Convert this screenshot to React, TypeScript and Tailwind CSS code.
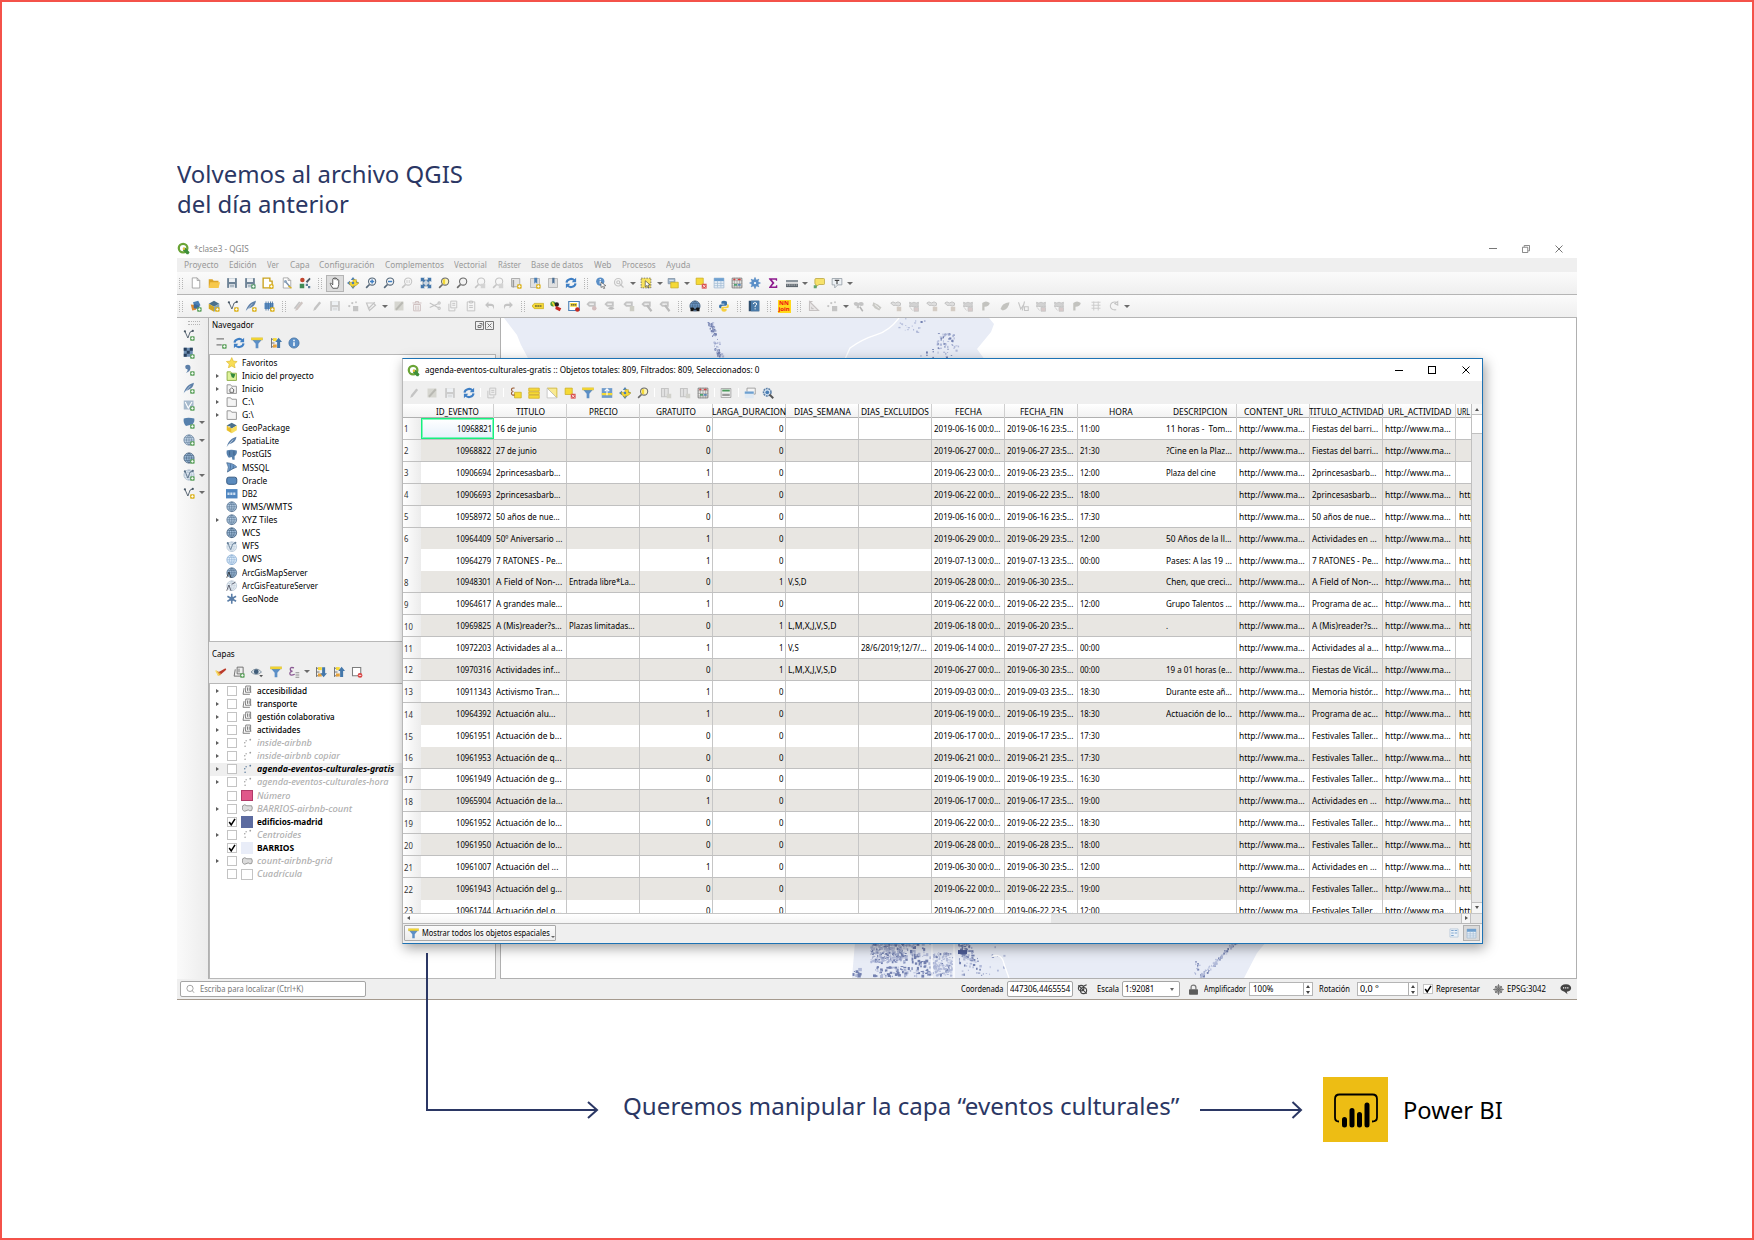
import { useLayoutEffect, useRef, type ReactNode } from "react";

/* Text squeezed horizontally: to width w when given, else by a fixed ratio. */
function Fit({ children, w, r = 0.86 }: { children: string; w?: number; r?: number }) {
  const inner = useRef<HTMLSpanElement>(null);
  const outer = useRef<HTMLSpanElement>(null);
  useLayoutEffect(() => {
    if (!inner.current || !outer.current) return;
    const natural = inner.current.offsetWidth;
    const target = w ?? natural * r;
    outer.current.style.width = `${target}px`;
    inner.current.style.transform = `scaleX(${target / natural})`;
  }, [children, w, r]);
  return (
    <span ref={outer} className="inline-block shrink-0 whitespace-pre align-top">
      <span ref={inner} className="inline-block origin-left whitespace-pre">
        {children}
      </span>
    </span>
  );
}

const BLUE = "#5b8fc7";
const DARK = "#4a5866";
const YEL = "#f5d936";
const G = "#c4c4c4";

const plus = (c = "#5fa35f") => (
  <g>
    <rect x="9.5" y="9.5" width="6" height="6" rx="1" fill={c} />
    <path d="M12.5 10.8v3.4M10.8 12.5h3.4" stroke="#fff" strokeWidth="1.2" />
  </g>
);
const lens = (c: string, body?: ReactNode, fill = "none") => (
  <g>
    <path d="M6 10L1.5 14.5" stroke={c} strokeWidth="2.2" />
    <circle cx="9.5" cy="6" r="4.8" fill={fill} stroke={c} strokeWidth="1.4" />
    {body}
  </g>
);
const globe = (c: string, f: string) => (
  <g>
    <circle cx="8" cy="8" r="6.8" fill={f} stroke={c} strokeWidth="1" />
    <path d="M1.5 8h13M2.5 4.8h11M2.5 11.2h11M8 1.2v13.6M8 1.2c-4.5 4-4.5 9.600 0 13.600M8 1.200c4.500 4 4.500 9.600 0 13.600" fill="none" stroke={c} strokeWidth="0.7" />
  </g>
);
const disk = (c: string) => (
  <g>
    <path d="M1.500 1.500h13v13h-13z" fill={c} />
    <path d="M4 1.500h8v5h-8zM4 9.500h8v5H4z" fill="#eef1f4" />
    <path d="M5 11.500h6M5 13h6" stroke={c} strokeWidth="0.8" />
  </g>
);
const pencil = (c: string) => <path d="M3 14.500l1-4L11 2l2.500 2-7 8.500z" fill={c} />;
const funnel = (
  <g>
    <path d="M1 3h14L9.800 9v6H6.200V9z" fill={BLUE} />
    <path d="M.5 1h15v3H.5z" fill={YEL} stroke="#c9ae20" strokeWidth="0.5" />
  </g>
);
const refresh = (
  <g fill="none" stroke="#3f7fc4" strokeWidth="2.800">
    <path d="M2 7.500a6 5.500 0 0 1 10.500-3M14 8.500a6 5.500 0 0 1-10.500 3" />
    <path d="M14.800 1v6H9zM1.200 15V9H7z" fill="#3f7fc4" stroke="none" />
  </g>
);
const tree = (up: boolean) => (
  <g>
    <path d="M2 1.500v13M2 3h4M2 8h4M2 13h4" stroke="#6a6a6a" strokeWidth="1.200" fill="none" />
    <rect x="4" y="1.500" width="5" height="4" fill={YEL} />
    <rect x="4" y="10" width="5" height="4" fill="#e6a23a" />
    <path d={up ? "M9.500 14.500V6.500H7L11.500 1 16 6.500h-2.500v8z" : "M9.500 1.500v8H7l4.500 5.500L16 9.500h-2.500v-8z"} fill="#4477aa" />
  </g>
);
const label = (c: string, extra?: ReactNode) => (
  <g>
    <path d="M1 5l3-3h9v7H4L1 6z" fill={c} />
    <path d="M4.500 5.500h6" stroke="#fff" strokeWidth="1.500" />
    {extra}
  </g>
);
const page = (c: string) => <path d="M3 1.200h6.500L13 4.700v10H3zM9.500 1.200v3.500H13" fill="#fff" stroke={c} strokeWidth="1.100" />;
const vee = (c = DARK, extra?: ReactNode) => (
  <g>
    <path d="M2.500 3l4 9L9.500 4 13 2.500" fill="none" stroke={c} strokeWidth="1.200" />
    <circle cx="2.500" cy="3" r="1.500" fill={c} />
    <circle cx="13" cy="2.500" r="1.500" fill={c} />
    {extra}
  </g>
);
const feather = (c = "#5c7fa8", extra?: ReactNode) => (
  <g>
    <path d="M1 15C3 8 7 3 14.500 1 14 7 10 10 4 11.500z" fill={c} />
    <path d="M1 15L10 5" stroke="#dfe9f3" strokeWidth="0.900" />
    {extra}
  </g>
);
const folder = (
  <path d="M1.500 2.500h5l1.500 2h6.500v10h-13z" fill="#f4f4f4" stroke="#8a8a8a" strokeWidth="1.200" />
);

const ICONS: Record<string, ReactNode> = {
  new: page("#9a9a9a"),
  open: (
    <g>
      <path d="M1 3h5l1.500 2H14v9H1z" fill="#dba52a" />
      <path d="M3 7h13l-2 7.500H1z" fill="#f7c84b" />
    </g>
  ),
  save: disk("#6e8396"),
  saveas: <g>{disk("#6e8396")}{plus("#5f9e72")}</g>,
  layout: <g><path d="M1.500 1.500h9v4h3v9h-12z" fill="#fff" stroke="#c9a21d" strokeWidth="1.800" />{plus("#dcb31e")}</g>,
  layoutmgr: <g>{page("#a0a0a0")}<path d="M5 5l7 8" stroke="#7b93ad" strokeWidth="2" /><circle cx="6" cy="6" r="2" fill="#8ea6bf" /><path d="M10 12l4 3" stroke="#dcb31e" strokeWidth="2" /></g>,
  style: <g><circle cx="4.500" cy="4" r="3" fill="#c0452e" /><path d="M9 6l5-5 1.500 1.500L11 8z" fill="#4d5c68" /><path d="M1 9h6v6H1z" fill="#3f8a55" /><path d="M9 9h3v3H9zM12 12h3v3h-3z" fill="#5d7f9b" /></g>,
  hand: <path d="M5 15L2 10c-1-2 .5-2.500 1.500-1L5 10.500V3c0-1.500 2-1.500 2 0v-1c0-1.500 2-1.500 2 0v1c0-1.500 2-1.500 2 .3v1c0-1.200 2-1.200 2 .3V10c0 2-1 3-1.500 5z" fill="#fff" stroke="#333" strokeWidth="1" />,
  pan: <g><path d="M8 0l3 4H5zM8 16l3-4H5zM0 8l4-3v6zM16 8l-4-3v6z" fill="#4b7fb5" /><path d="M8 3.500h4.500v4H16l-4 4H8.500V14L4 10.500 3 7h5z" fill={YEL} stroke="#b89a1c" strokeWidth="0.700" /><path d="M6.500 6.500h3v3h-3z" fill="#4b7fb5" /></g>,
  zin: lens("#56687a", <path d="M9.500 3.200v5.600M6.700 6h5.600" stroke="#3f7fc4" strokeWidth="2" />),
  zout: lens("#56687a", <path d="M6.700 6h5.600" stroke="#3f7fc4" strokeWidth="2" />),
  z11: lens(G, <path d="M8 4v4M11 4v4" stroke={G} />),
  zfull: <g><path d="M4 4h8v8H4z" fill="#c9d5e1" stroke="#56687a" strokeWidth="0.800" /><path d="M1 1h5.500L5 2.800 7 5 5 7 2.800 5 1 6.500zM15 1v5.500L13.200 5 11 7 9 5l2-2.200L9.500 1zM1 15V9.500L2.800 11 5 9l2 2-2 2.200L6.500 15zM15 15H9.500l1.500-1.800L9 11l2-2 2.200 2L15 9.500z" fill="#4477ab" /></g>,
  zsel: lens("#6a6a6a", <path d="M6.500 3h3v6.500h-3z" fill={YEL} />, "#fbf3b8"),
  zlay: lens("#6a6a6a", null, "#f3f3f3"),
  zgray: lens(G, <path d="M9 9h6v6H9z" fill="#d4d4d4" />),
  mapnew: <g><path d="M2 2h11v11H2z" fill="#e4e4e4" stroke="#999" /><path d="M4.500 4v10" stroke="#999" strokeWidth="2" />{plus("#dcb31e")}</g>,
  book: <g><path d="M2 2h12v12H2z" fill="#e0e0e0" stroke="#aaa" /><path d="M7 1h4v8L9 7 7 9z" fill="#4b7fb5" />{plus("#dcb31e")}</g>,
  book2: <g><path d="M2 2h12v12H2z" fill="#e0e0e0" stroke="#aaa" /><path d="M7 1h3v8L8.500 7.500 7 9z" fill="#4b6f95" /></g>,
  refresh,
  ident: <g><circle cx="7" cy="6" r="5.500" fill="#5b8fc7" /><path d="M7 5v4M7 2.600v1.400" stroke="#fff" strokeWidth="1.600" /><path d="M8 7l6.500 4.500-3 .5 1.500 3-1.500.5-1.500-3-2 1.500z" fill="#fff" stroke="#444" strokeWidth="0.800" /></g>,
  action: <g fill="none" stroke={G} strokeWidth="1.600"><circle cx="7" cy="7" r="5" /><circle cx="7" cy="7" r="2" /><path d="M9 9l5 5" /></g>,
  selrect: <g><path d="M1.500 1.500h13v13h-13z" fill="#f8e35d" stroke="#5a5a5a" strokeDasharray="2 1.500" /><path d="M7 5l6.500 5.500-3 .3 1.500 3-1.500.6-1.300-3L7 13z" fill="#fff" stroke="#333" strokeWidth="0.800" /></g>,
  selval: <g><path d="M1.500 2h9v7h-9z" fill="#9db4cb" stroke="#8292a3" /><path d="M5 7h10v7.500H5z" fill={YEL} stroke="#c9ae20" /><path d="M3 4.500h6" stroke="#fff" /></g>,
  desel: <g><path d="M1.500 1.500h9.500V10H1.500z" fill={YEL} stroke="#c9ae20" /><path d="M9 9h6.500v6.500H9z" fill="#d94f4f" /><path d="M10.500 10.500l3.500 3.500M14 10.500L10.500 14" stroke="#fff" /></g>,
  table: <g><path d="M1.500 1.500h13v13h-13z" fill="#e7eff7" stroke="#9cb6d0" /><path d="M1.500 1.500h13V5.500h-13z" fill="#6ea0d0" /><path d="M1.500 8.500h13M1.500 11.500h13M6 5v9M10.500 5v9" stroke="#a5bdd4" /></g>,
  stats: <g><path d="M1.500 1.500h13v13h-13z" fill="#f1f1ee" stroke="#666" /><path d="M1 5h14M1 8.500h14M1 12h14M4.500 1v14M8 1v14M11.500 1v14" stroke="#8a8a8a" strokeWidth="0.800" /><path d="M3 3.300h3M9 3.300h4" stroke="#cc4444" strokeWidth="2" /><path d="M4 10.500h4" stroke="#3c9a62" strokeWidth="2" /><path d="M9 10.500h4" stroke="#4b7fb5" strokeWidth="2" /></g>,
  gear: <g stroke="#5b8fc7" strokeWidth="2.200"><circle cx="8" cy="8" r="4" fill="#8db4dc" /><path d="M8 .8v14.400M.8 8h14.400M3 3l10 10M13 3L3 13" /><circle cx="8" cy="8" r="1.500" fill="#fff" stroke="none" /></g>,
  sigma: <path d="M2.500 1.500h11v3.500h-1.500l-.5-1.500H6.500L10 8l-4 4.700h5.500l.7-1.700h1.500v3.700h-11v-1L7 8 2.500 2.500z" fill="#8d1a8d" />,
  measure: <g><path d="M0 4h16v3H0z" fill="#8c959d" /><path d="M0 9h16v4.500H0z" fill="#5d666e" /><path d="M1 10.700h14" stroke="#ddd" strokeDasharray="2 1" /></g>,
  tip: <g><path d="M4 2h10q1.500 0 1.500 1.500v5Q15.500 10 14 10H8l-4 3v-3q-1.500 0-1.500-1.500v-5Q2.500 2 4 2z" fill="#f7e26b" stroke="#b5a13b" /><path d="M1 11h4v4H1z" fill="#62a36d" /></g>,
  text: <g><path d="M1.500 2h13v8.500H9l-4 4v-4H1.500z" fill="#edf1f4" stroke="#8d979f" /><path d="M5 4.500h6M8 4.500v5" stroke="#444" strokeWidth="1.500" /></g>,
  dsm: <g><path d="M4 3l7-2 3 6-7 4z" fill="#4b7fb5" /><path d="M1 6l8 1-1 6-5 1z" fill="#dd8c32" /><path d="M5 5l8 3-2 4-6-1z" fill="#3d6a98" />{plus()}</g>,
  gpkg: <g><path d="M1 5l7-4 7 4-7 4z" fill="#4a708c" /><path d="M1 5l7 4v6.500l-7-4z" fill="#e9bf2a" /><path d="M15 5L8 9v6.500l7-4z" fill="#f7dd5c" /><path d="M3 7l3-1" stroke="#fff" /></g>,
  gpkgnew: <g><path d="M1 5l7-4 7 4-7 4z" fill="#4a708c" /><path d="M1 5l7 4v6.500l-7-4z" fill="#cfa524" /><path d="M15 5L8 9v6.500l7-4z" fill="#86a5b5" />{plus("#dcb31e")}</g>,
  shp: vee(DARK, plus("#dcb31e")),
  vec: vee(DARK, plus()),
  vecy: vee(DARK, plus("#dcb31e")),
  spl: feather("#5c7fa8", plus("#dcb31e")),
  splg: feather("#5c7fa8", plus()),
  feather: feather(),
  chip: <g><path d="M2 4h12v8H2z" fill="#5b8fc7" /><path d="M4 2v12M7 2v12M10 2v12M12.500 2v12" stroke="#46729f" strokeWidth="1.200" />{plus("#dcb31e")}</g>,
  pencils: <g>{pencil("#cfc6c3")}<path d="M1 11L8 2l2 1-7 9z" fill={G} /></g>,
  pencil: pencil(G),
  gsave: disk("#cccccc"),
  gpts: <g fill={G}><circle cx="3" cy="8" r="1.500" /><circle cx="7" cy="4" r="1.500" /><circle cx="12" cy="3" r="1.200" /><path d="M8 8h7v7H8z" /></g>,
  gnode: <g><path d="M2 4h9l3 3-8 7z" fill="none" stroke={G} strokeWidth="1.600" /><path d="M4 12l9-9" stroke={G} strokeWidth="1.500" /></g>,
  gnote: <g><path d="M2 2h12v12H2z" fill="#d6d6d0" /><path d="M4 13L13 3" stroke="#b9b9b3" strokeWidth="2.500" /></g>,
  gtrash: <path d="M2 4h12M6 4V2h4v2M3.500 6h9v8.500h-9zM6.500 7.500v6M9.500 7.500v6" fill="none" stroke="#cfc0c0" strokeWidth="1.300" />,
  gcut: <g fill="none" stroke={G} strokeWidth="1.500"><path d="M1 4l11 6M1 10l11-5" /><circle cx="13.500" cy="11" r="1.500" /><circle cx="13.500" cy="4" r="1.500" /></g>,
  gcopy: <path d="M5 1.500h8v9H5zM2.500 5v9.500h8v-3M7 4.500h4M7 7h4" fill="none" stroke={G} strokeWidth="1.300" />,
  gpaste: <path d="M3 2.500h10v12H3zM6 1.500h4v2.500H6zM5.500 7.500h5M5.500 10h5" fill="none" stroke={G} strokeWidth="1.300" />,
  gundo: <path d="M6 2L1.500 6.500 6 11V8h4q2.500 0 2.500 5Q15.500 5 9.500 5H6z" fill={G} />,
  gredo: <path d="M10 2l4.500 4.500L10 11V8H6q-2.500 0-2.500 5Q.5 5 6.500 5H10z" fill={G} />,
  lab: <g><path d="M0 8l3-3.500h12.500v7H3z" fill={YEL} stroke="#c9ae20" /><path d="M4 8h9" stroke="#333" strokeWidth="1.600" strokeDasharray="2.500 .6" /></g>,
  diag: <g><circle cx="4" cy="5" r="3.500" fill="#4e9a3c" /><circle cx="9" cy="6" r="3" fill="#222" /><path d="M8 8l7 3-2 4-6-3z" fill="#c6281f" /><path d="M3 3l3 5" stroke={YEL} strokeWidth="2" /></g>,
  labbox: <g><path d="M1 2h14v12H1z" fill="#fff" stroke="#4b7fb5" strokeWidth="1.500" /><path d="M3 4h9v5H3z" fill={YEL} /><path d="M4 6.500h7" stroke="#444" strokeWidth="1.500" strokeDasharray="2 .6" /><circle cx="12.500" cy="12.500" r="3" fill="#c6281f" /></g>,
  gl1: label(G, <circle cx="11" cy="11" r="3" fill="#d3bdbd" />),
  gl2: label(G, <path d="M5 11q5-4 9 0-4 4-9 0" fill="#bdbdbd" />),
  gl3: label(G, <path d="M9 8h6v7H9z" fill="#cdcdc4" />),
  gl4: label(G, <path d="M8 7l6 8" stroke="#bbb" strokeWidth="3" />),
  metas: <g>{globe("#3e5875", "#6f9bcb")}<path d="M2 15V10h4l1 2h2l1-2h4v5h-4v-2H6v2z" fill="#141414" /></g>,
  python: <g><path d="M8 1C5 1 4.500 2 4.500 3.500V5H8.500v1H3C1 6 1 11 3 11h1.500V9q0-1.500 2-1.500h4Q12 7.500 12 6V3.500Q12 1 8 1z" fill="#3a72a8" /><path d="M8 15.500c3 0 3.500-1 3.500-2.500v-1.500H7.500V10.500H13c2 0 2-5 0-5h-.8V7.500q0 1.500-2 1.500h-4Q4.500 9 4.500 10.500V13q0 2.500 3.500 2.500z" fill="#f6cf3f" /></g>,
  help: <g><path d="M1 1h14v14H1z" fill="#2f4d6c" /><path d="M4 1h11v14H4z" fill="#4a7aa8" /><path d="M7 5.500q0-2 2.300-2t2.200 2q0 1.300-2 2.500v1.500M9.500 11v1.500" stroke="#fff" strokeWidth="1.300" fill="none" /></g>,
  ruler: <path d="M2 2l12 12H2zM5 9v2.500h2.500M2 2h4" fill="#e9e7e7" stroke="#c6c2c2" strokeWidth="1.500" />,
  gq1: <g><path d="M1 4q3-3 6 0 4-3 7 0v3q-3 2-6 0v4H5V8Q1 8 1 4z" fill={G} /><path d="M9 9l4 6" stroke="#b5b5b5" strokeWidth="2" /></g>,
  gq2: <g><path d="M3 3l6 3 5 4-3 4-6-3-3-4z" fill="#c9c9c5" /><path d="M5 6l6 5" stroke="#fff" /></g>,
  gq3: <g><path d="M1 4q3-3 6 0 4-3 7 0v3q-3 2-6 0-4 2-7-3z" fill="#dedede" stroke="#bfbfbf" strokeWidth="1.200" /><path d="M9 9h6v6H9z" fill="#d4ccc4" /></g>,
  gq4: <g><path d="M2 3q3 2 6 0 3 2 6 0-1 4 0 6-3-1-6 0-3-1-6 0 1-3 0-6z" fill="#d2d2d2" stroke="#bebebe" /><path d="M3 10l3 4M8 10h6v5H8z" fill="#d8caca" stroke="#c4c4c4" /></g>,
  gq5: <path d="M3 14V4q5-4 10 0-1 5-7 5v5z" fill="#c3c3bf" />,
  gq6: <path d="M2 12q2-8 12-9-1 9-9 11z" fill="#c3c3bf" />,
  gq7: <path d="M2 3l3 9 4-6M10 2l-3 12M10 9h5v5h-5z" fill="none" stroke={G} strokeWidth="1.400" />,
  gq8: <path d="M2 3h12M2 7h12M2 11h12M5 2v12M11 2v12" fill="none" stroke="#cccccc" strokeWidth="1.300" />,
  gq9: <path d="M12 3Q4 1 3 8q1 6 8 5M9 5l4-3v5z" fill="none" stroke={G} strokeWidth="1.400" />,
  raster: <g><path d="M1 1h12v12H1z" fill="#6e8fb3" /><path d="M1 1h4v4H1zM9 1h4v4H9zM5 5h4v4H5zM1 9h4v4H1z" fill="#28405e" />{plus()}</g>,
  comma: <g><path d="M3 4q0-3 3.500-3T10 5q0 5-6 7 3-3 2-5-3 0-3-3z" fill="#5c7fa8" />{plus()}</g>,
  virt: <g><path d="M1 2h13v12H1z" fill="#a6b9cc" /><path d="M3 4l4 8 5-8" stroke="#fff" fill="none" strokeWidth="1.500" />{plus()}</g>,
  pg: <g><path d="M1 2q6-2 14 0 1 5-3 8v5H9l-1-4-4 1Q0 8 1 2z" fill="#5781ad" /><path d="M5 3v6M11 3v6" stroke="#36577c" /></g>,
  pgadd: <g><path d="M1 2q6-2 14 0 1 5-3 8l-4 1-4 1Q0 8 1 2z" fill="#5781ad" />{plus()}</g>,
  wmsadd: <g>{globe("#5d7896", "#c3d5e7")}{plus()}</g>,
  wcsadd: <g>{globe("#3e5875", "#9fbedc")}{plus()}</g>,
  wfsadd: <g>{globe("#a3b6c9", "#e6eef5")}{vee("#5a7188")}{plus()}</g>,
  wms: globe("#4c6a89", "#b3cae1"),
  wcs: globe("#33506f", "#a6c3e0"),
  wfs: <g>{globe("#b3c4d5", "#e9f0f6")}{vee("#67809a")}</g>,
  ows: globe("#7fa6cf", "#e2eefb"),
  arc: <g>{globe("#4c6a89", "#9ab6d2")}<path d="M1 15l3-8 3 8" stroke="#222" fill="none" /></g>,
  arcf: <g>{globe("#b3c2d0", "#edf2f7")}<path d="M1 15l3-8 3 8M8 6l5-3" stroke="#334" fill="none" /></g>,
  geonode: <g stroke="#5c7fa8" strokeWidth="2.200"><path d="M8 1v14M2 4.500l12 7M14 4.500l-12 7" /><circle cx="8" cy="8" r="2" fill="#5c7fa8" /></g>,
  star: <path d="M8 .8l2.200 4.900 5.300.6-4 3.600 1.200 5.300L8 12.500l-4.700 2.700 1.200-5.300-4-3.600 5.300-.6z" fill="#f8dd55" stroke="#d8b424" strokeWidth="0.800" />,
  projhome: <g><path d="M1.500 2.500h5l1.500 2h6.500v10h-13z" fill="#dff29c" stroke="#86a83a" strokeWidth="1.200" /><path d="M6 4l7 2-2 5-3-1z" fill="#338a3c" /></g>,
  home: <g>{folder}<path d="M4.500 10L8 6.500l3.500 3.500M5.500 9.500V13h5V9.500" stroke="#444" fill="none" /></g>,
  folder,
  mssql: <path d="M1 1q10 1 14 6Q9 9 2 14q3-7-1-13zM6 3q1 5-1 9M10 5q1 3-1 5" fill="#6f9bcb" stroke="#3e6289" strokeWidth="1" />,
  oracle: <rect x="1" y="3" width="14" height="10" rx="3" fill="#5b8bbd" stroke="#35587f" strokeWidth="1.300" />,
  db2: <g><path d="M0 1.500h16v13H0z" fill="#4f86c0" /><path d="M2 8h12" stroke="#cfe0f2" strokeWidth="3.500" strokeDasharray="3 1" /></g>,
  addlay: <g><path d="M2 2.500h10M2 10.500h7" stroke="#7d7d7d" strokeWidth="1.400" />{plus()}</g>,
  funnel,
  up: tree(true),
  down: tree(false),
  info: <g><circle cx="8" cy="8" r="6.800" fill="#5b8fc7" stroke="#426f9f" /><path d="M8 7v5M8 3.800v1.800" stroke="#fff" strokeWidth="2" /></g>,
  brush: <g><path d="M1 6l5 2 2 4-4 1z" fill="#e5a132" /><path d="M5 8L14 3l1 2-7 6z" fill="#bb3a2a" /><path d="M1 6l4 7" stroke="#f6dd68" strokeWidth="2" /></g>,
  group: <g fill="none" stroke="#686868" strokeWidth="1.200"><path d="M5.500 1.500h7v9M5.500 1.500L5 10.500h8.500M3 4.500L1.500 13.500h10M8 3.500v5M10.500 3.500v5" /></g>,
  groupadd: <g><path d="M5.500 1.500h8v9h-8zM3 4.500L1.500 13.500h10M8 3.500v5" fill="none" stroke="#686868" strokeWidth="1.200" />{plus()}</g>,
  eye: <g><path d="M0 8q7-8 14 0-7 6.500-14 0z" fill="#dfe5ea" stroke="#6b7d8d" /><circle cx="7" cy="7.500" r="3.200" fill="#3f5c78" /><path d="M11 12h5l-2.500 3z" fill="#555" /></g>,
  eps: <g><path d="M8 2.500Q3 1 3 4t3 3Q2 7.500 2.500 10.500T9 11" fill="none" stroke="#8a5a93" strokeWidth="1.700" /><path d="M10 9h5M10 12h5M10 15h5" stroke="#8e8e8e" strokeWidth="1.500" /></g>,
  remove: <g><path d="M2 2h11v11H2z" fill="#fff" stroke="#7d7d7d" strokeWidth="1.400" /><circle cx="12" cy="12.500" r="3.200" fill="#d94343" /><path d="M10.300 12.500h3.400" stroke="#fff" strokeWidth="1.200" /></g>,
  points: <g fill="#9d9d9d"><circle cx="4" cy="7" r="1.100" /><circle cx="6" cy="4" r="1" /><circle cx="12" cy="2.500" r="1.300" /><circle cx="4.500" cy="12" r="1.100" /></g>,
  pointsb: <g fill="#5a7a9c"><circle cx="4" cy="7" r="1.100" /><circle cx="6" cy="4" r="1" /><circle cx="12" cy="2.500" r="1.300" /><circle cx="4.500" cy="12" r="1.100" /></g>,
  poly: <path d="M1 4q3-3 6 0h7q2 3 0 7-3 1-5-1l-5 2Q-1 11 1 4z" fill="#dcdcdc" stroke="#888" strokeWidth="1.200" />,
  selexp: <g><path d="M6 7h9v7.500H6z" fill={YEL} stroke="#c9ae20" /><path d="M6 1.500Q2 1 2 3.500T4.500 6Q1.500 6.500 2 9t4 1.500" fill="none" stroke="#9a5a30" strokeWidth="1.500" /></g>,
  selall: <path d="M1 1.500h14v4H1zM1 6.500h14v3.500H1zM1 11h14v4H1z" fill={YEL} stroke="#d0ab23" />,
  selinv: <g><path d="M1.500 1.500h13v13z" fill="#f9ea91" stroke="#c9ae20" /><path d="M1.500 1.500v13h13z" fill="#fff" stroke="#bbb" /></g>,
  seltop: <g><path d="M1 1.500h14v13H1z" fill="#6f9bcb" /><path d="M1 8h14v3H1z" fill={YEL} /><path d="M8 3v8M5 5.500L8 2.500l3 3" stroke="#fff" fill="none" strokeWidth="1.500" /></g>,
  gcol: <g><path d="M2 2h9v11H2zM6 2v11" fill="#e2e2e2" stroke={G} strokeWidth="1.500" /><path d="M9 9h6v6H9z" fill="#d2d2cc" /></g>,
  cond: <g><path d="M1.500 2h13v12h-13z" fill="#eee" stroke="#999" /><path d="M3 3.500h10v2.500H3z" fill="#4a9a5a" /><path d="M3 9h10v3H3z" fill="#9a9a9a" /></g>,
  dock: <g><path d="M4 1.500h11v8H4z" fill="#f4f4f4" stroke="#8c8c8c" /><path d="M1 6h12v9H1z" fill="#dfe9f3" /><path d="M1 6h12v3H1z" fill="#6ea0d0" /></g>,
  acts: <g><circle cx="7" cy="7" r="5" fill="#d8e5f2" stroke="#5a7ea6" strokeWidth="2" strokeDasharray="2.500 1" /><circle cx="7" cy="7" r="2.500" fill="#4b7fb5" /><path d="M10 10l5 5" stroke="#555" strokeWidth="2.500" /></g>,
  form: <g><path d="M1.500 1.500h13v13h-13z" fill="#eaf1f8" stroke="#a9bfd6" /><path d="M3.500 4h4M3.500 8h4M3.500 12h4M9 4h4M9 8h4" stroke="#7fa6cf" strokeWidth="1.600" /></g>,
  qgis: <g><circle cx="7.500" cy="7.500" r="5.300" fill="none" stroke="#6aa436" strokeWidth="2.800" /><path d="M7.500 7l3 0 5 5.500-1.500 2.500h-2l-4.500-5z" fill="#3f8f3a" /><circle cx="8.500" cy="8.300" r="1.500" fill="#e8c33a" /></g>,
  ext: <g fill="none" stroke="#444" strokeWidth="1.600"><circle cx="6" cy="6" r="4" /><circle cx="9.500" cy="9.500" r="4.500" /><path d="M2 2l12 12M10 3l4-2" /></g>,
  lock: <g><path d="M4.500 8V5q0-3.500 3.500-3.500T11.500 5v3" fill="none" stroke="#777" strokeWidth="1.800" /><rect x="1.500" y="7.500" width="13" height="8" rx="1" fill="#5c5c5c" /></g>,
  crs: <g stroke="#666" strokeWidth="1.100" fill="none"><circle cx="8" cy="8" r="5.500" fill="#d0d0d0" /><circle cx="8" cy="8" r="3" /><path d="M8 0v16M0 8h16M3 3l10 10M13 3L3 13" /></g>,
  bubble: <g><path d="M8 1.500c9 0 9 10 1 10l1 3.500-4-3.500c-8-1-7-10 2-10z" fill="#444" /><path d="M4 6.500h8" stroke="#fff" strokeWidth="1.600" strokeDasharray="1.600 1.200" /></g>,
  search: <g fill="none" stroke="#888" strokeWidth="1.200"><circle cx="8" cy="7" r="5" /><path d="M11.500 10.500l3 3.500" /></g>,
};

function Icon({ k, cls = "size-[12px]" }: { k: string; cls?: string }) {
  if (k === "nn")
    return (
      <span className="flex size-[13px] flex-col items-center justify-center bg-[#ffd91a] text-[6px] leading-[6px] font-bold text-[#f01010]">
        <span>NN</span>
        <span>join</span>
      </span>
    );
  return (
    <svg viewBox="0 0 16 16" className={`${cls} shrink-0`}>
      {ICONS[k]}
    </svg>
  );
}

const Caret = () => <span className="border-x-[3px] border-t-[3.5px] border-x-transparent border-t-[#6b6b6b]" />;
const Dots = () => <span className="h-[11px] w-[4px] border-x border-dotted border-[#b5b5b5]" />;

/* Tool strip: "|" draws a grip, ":" a thin divider, "v" a drop-down caret, "!x" a pressed button. */
function Tools({ items }: { items: string }) {
  return (
    <>
      {items.split(" ").map((t, i) => {
        if (t === "|") return <span key={i} className="flex w-[11.6px] shrink-0 justify-center"><Dots /></span>;
        if (t === ":") return <span key={i} className="flex w-[5.3px] shrink-0 justify-center"><span className="h-[9px] w-px bg-[#fff]" /></span>;
        if (t === "v") return <span key={i} className="flex w-[9px] shrink-0 justify-center"><Caret /></span>;
        if (t[0] === "!")
          return (
            <span key={i} className="flex h-[17px] w-[18.2px] shrink-0 items-center justify-center border border-[#b4b4b4] bg-[#dcdcdc]">
              <Icon k={t.slice(1)} />
            </span>
          );
        return <span key={i} className="flex w-[18.2px] shrink-0 justify-center"><Icon k={t} /></span>;
      })}
    </>
  );
}

const MENU: [string, number][] = [
  ["Proyecto", 34.7], ["Edición", 28], ["Ver", 11.8], ["Capa", 19.3], ["Configuración", 55], ["Complementos", 59.3],
  ["Vectorial", 33], ["Ráster", 23], ["Base de datos", 52], ["Web", 17.7], ["Procesos", 33.7], ["Ayuda", 25],
];

const NAV: [string, string, boolean, number][] = [
  ["star", "Favoritos", false, 35.5], ["projhome", "Inicio del proyecto", true, 72], ["home", "Inicio", true, 21.5],
  ["folder", "C:\\", true, 11.5], ["folder", "G:\\", true, 11.5], ["gpkg", "GeoPackage", false, 47.5],
  ["feather", "SpatiaLite", false, 37.5], ["pg", "PostGIS", false, 29.5], ["mssql", "MSSQL", false, 27.5],
  ["oracle", "Oracle", false, 25], ["db2", "DB2", false, 15.5], ["wms", "WMS/WMTS", false, 50],
  ["wms", "XYZ Tiles", true, 35.5], ["wcs", "WCS", false, 18.5], ["wfs", "WFS", false, 17], ["ows", "OWS", false, 19.5],
  ["arc", "ArcGisMapServer", false, 66], ["arcf", "ArcGisFeatureServer", false, 76], ["geonode", "GeoNode", false, 36.5],
];

type Layer = { n: string; w: number; k: string; arrow?: boolean; on?: boolean; s: "n" | "g" | "b" | "bi" };
const LAYERS: Layer[] = [
  { n: "accesibilidad", w: 50, k: "group", arrow: true, s: "n" },
  { n: "transporte", w: 40.5, k: "group", arrow: true, s: "n" },
  { n: "gestión colaborativa", w: 78, k: "group", arrow: true, s: "n" },
  { n: "actividades", w: 43, k: "group", arrow: true, s: "n" },
  { n: "inside-airbnb", w: 55, k: "points", arrow: true, s: "g" },
  { n: "inside-airbnb copiar", w: 83, k: "points", arrow: true, s: "g" },
  { n: "agenda-eventos-culturales-gratis", w: 137, k: "pointsb", arrow: true, s: "bi" },
  { n: "agenda-eventos-culturales-hora", w: 131, k: "points", arrow: true, s: "g" },
  { n: "Número", w: 33.5, k: "#e0578a", s: "g" },
  { n: "BARRIOS-airbnb-count", w: 95, k: "poly", arrow: true, s: "g" },
  { n: "edificios-madrid", w: 66, k: "#5c6ba0", on: true, s: "b" },
  { n: "Centroides", w: 44, k: "points", arrow: true, s: "g" },
  { n: "BARRIOS", w: 37.5, k: "#e9edf8", on: true, s: "b" },
  { n: "count-airbnb-grid", w: 75, k: "poly", arrow: true, s: "g" },
  { n: "Cuadrícula", w: 45, k: "#ffffff", s: "g" },
];
const LAYER_TEXT = {
  n: "text-black font-medium",
  g: "text-[#b0b0b0] italic font-medium",
  b: "text-black font-bold",
  bi: "text-black font-bold italic",
};
const SWATCH: Record<string, string> = {
  "#e0578a": "bg-[#e0578a] border-[#b13a68]",
  "#5c6ba0": "bg-[#5c6ba0] border-[#5c6ba0]",
  "#e9edf8": "bg-[#e9edf8] border-[#e9edf8]",
  "#ffffff": "bg-white border-[#c4c4c4]",
};

function Check({ on }: { on?: boolean }) {
  return (
    <svg viewBox="0 0 10 10" className="size-[10px] shrink-0">
      <rect x=".5" y=".5" width="9" height="9" fill="#fff" stroke="#c3c3c3" />
      {on && <path d="M2.200 5l2 2.800L8 1.800" fill="none" stroke="#000" strokeWidth="1.500" />}
    </svg>
  );
}

const Twisty = ({ show }: { show?: boolean }) => (
  <span className="flex w-[5px] shrink-0">
    {show && <span className="border-y-[2.5px] border-l-[3.5px] border-y-transparent border-l-[#5c5c5c]" />}
  </span>
);

/* id, title, price, free, long, weekdays, excluded, start, end, hour, description, activity, third URL */
type Row = [string, string, string, string, string, string, string, string, string, string, string, string, boolean];
const ROWS: Row[] = [
  ["10968821", "16 de junio", "", "0", "0", "", "", "06-16", "06-16", "11:00", "11 horas -  Tom...", "Fiestas del barri...", false],
  ["10968822", "27 de junio", "", "0", "0", "", "", "06-27", "06-27", "21:30", "?Cine en la Plaz...", "Fiestas del barri...", false],
  ["10906694", "2princesasbarb...", "", "1", "0", "", "", "06-23", "06-23", "12:00", "Plaza del cine", "2princesasbarb...", false],
  ["10906693", "2princesasbarb...", "", "1", "0", "", "", "06-22", "06-22", "18:00", "", "2princesasbarb...", true],
  ["10958972", "50 años de nue...", "", "0", "0", "", "", "06-16", "06-16", "17:30", "", "50 años de nue...", true],
  ["10964409", "50º Aniversario ...", "", "1", "0", "", "", "06-29", "06-29", "12:00", "50 Años de la ll...", "Actividades en ...", true],
  ["10964279", "7 RATONES - Pe...", "", "1", "0", "", "", "07-13", "07-13", "00:00", "Pases: A las 19 ...", "7 RATONES - Pe...", true],
  ["10948301", "A Field of Non-...", "Entrada libre*La...", "0", "1", "V,S,D", "", "06-28", "06-30", "", "Chen, que creci...", "A Field of Non-...", true],
  ["10964617", "A grandes male...", "", "1", "0", "", "", "06-22", "06-22", "12:00", "Grupo Talentos ...", "Programa de ac...", true],
  ["10969825", "A (Mis)reader?s...", "Plazas limitadas...", "0", "1", "L,M,X,J,V,S,D", "", "06-18", "06-20", "", ".", "A (Mis)reader?s...", true],
  ["10972203", "Actividades al a...", "", "1", "1", "V,S", "28/6/2019;12/7/...", "06-14", "07-27", "00:00", "", "Actividades al a...", false],
  ["10970316", "Actividades inf...", "", "0", "1", "L,M,X,J,V,S,D", "", "06-27", "06-30", "00:00", "19 a 01 horas (e...", "Fiestas de Vicál...", false],
  ["10911343", "Activismo Tran...", "", "1", "0", "", "", "09-03", "09-03", "18:30", "Durante este añ...", "Memoria histór...", true],
  ["10964392", "Actuación alu...", "", "1", "0", "", "", "06-19", "06-19", "18:30", "Actuación de lo...", "Programa de ac...", true],
  ["10961951", "Actuación de b...", "", "0", "0", "", "", "06-17", "06-17", "17:30", "", "Festivales Taller...", true],
  ["10961953", "Actuación de q...", "", "0", "0", "", "", "06-21", "06-21", "17:30", "", "Festivales Taller...", true],
  ["10961949", "Actuación de g...", "", "0", "0", "", "", "06-19", "06-19", "16:30", "", "Festivales Taller...", true],
  ["10965904", "Actuación de la...", "", "1", "0", "", "", "06-17", "06-17", "19:00", "", "Actividades en ...", true],
  ["10961952", "Actuación de lo...", "", "0", "0", "", "", "06-22", "06-22", "18:30", "", "Festivales Taller...", true],
  ["10961950", "Actuación de lo...", "", "0", "0", "", "", "06-28", "06-28", "18:00", "", "Festivales Taller...", true],
  ["10961007", "Actuación del ...", "", "1", "0", "", "", "06-30", "06-30", "12:00", "", "Actividades en ...", true],
  ["10961943", "Actuación del g...", "", "0", "0", "", "", "06-22", "06-22", "19:00", "", "Festivales Taller...", true],
  ["10961744", "Actuación del g...", "", "0", "0", "", "", "06-22", "06-22", "12:00", "", "Festivales Taller...", true],
];
const BORDERLESS = [6, 7, 14, 15, 22];
const HEADS: [string, number][] = [
  ["ID_EVENTO", 43], ["TITULO", 29], ["PRECIO", 29], ["GRATUITO", 40], ["LARGA_DURACION", 74], ["DIAS_SEMANA", 57],
  ["DIAS_EXCLUIDOS", 68], ["FECHA", 27], ["FECHA_FIN", 43], ["HORA", 23.5], ["DESCRIPCION", 54.5], ["CONTENT_URL", 59],
  ["TITULO_ACTIVIDAD", 75], ["URL_ACTIVIDAD", 63],
];
const GRID =
  "grid grid-cols-[18px_73px_73px_73px_73px_73px_73px_73px_73px_73px_86px_73px_73px_73px_73px_16px]";

const cellW = (t: string) => {
  if (t === "Actuación del ...") return 62;
  if (t === "Actuación alu...") return 59.5;
  if (t === "Actividades inf..." || t === "Activismo Tran...") return 63.5;
  if (t.startsWith("2princesas") || t.startsWith("50 años")) return 64;
  if (t.startsWith("Actividades en")) return 65;
  if (t === "L,M,X,J,V,S,D") return 48.5;
  return t.endsWith("...") ? 66 : undefined;
};

function Cell({ t, right, noLine, w }: { t: string; right?: boolean; noLine?: boolean; w?: number }) {
  return (
    <span className={`flex items-center overflow-hidden border-[#c6c6c6] px-[2px] pt-px ${right ? "justify-end" : ""} ${noLine ? "" : "border-r"}`}>
      {t && <Fit w={w ?? cellW(t)} r={0.87}>{t}</Fit>}
    </span>
  );
}

function AttributeTable() {
  return (
    <section className="absolute top-[358px] left-[402px] flex h-[586px] w-[1081px] flex-col border-y border-r border-l border-y-[#1c72b4] border-r-[#1c72b4] border-l-[#b8b8b8] bg-[#efefef] font-['Noto_Sans',sans-serif] text-[9px] leading-[12px] text-black shadow-[2px_4px_12px_rgba(0,0,0,0.38)]">
      <header className="flex h-[22px] shrink-0 items-center bg-white pr-[12px] pl-[4px]">
        <Icon k="qgis" cls="size-[13px]" />
        <span className="ml-[5px] flex-1"><Fit w={334}>agenda-eventos-culturales-gratis :: Objetos totales: 809, Filtrados: 809, Seleccionados: 0</Fit></span>
        <span className="h-px w-[8px] bg-black" />
        <span className="ml-[25px] size-[8px] border border-black" />
        <svg viewBox="0 0 8 8" className="ml-[26px] size-[8px]"><path d="M.5.5l7 7M7.500.5l-7 7" stroke="#000" /></svg>
      </header>
      <div className="flex h-[23px] shrink-0 items-center pl-[2px]">
        <Tools items="pencil gnote gsave refresh : gcopy : selexp selall selinv desel funnel seltop pan zsel : gcol gcol stats : cond : dock acts" />
      </div>
      <div className="flex h-[509.5px] shrink-0 border-b border-[#c6c6c6] bg-white">
        <div className="w-[1068px] overflow-hidden">
          <div className={`${GRID} h-[14px] border-b border-[#b0b0b0] bg-linear-to-b from-white to-[#f2f2f2]`}>
            <span className="border-r border-transparent" />
            {HEADS.map(([h, w], i) => (
              <span key={h} className={`flex items-center justify-center border-[#cfcfcf] pt-[2px] ${i === 9 ? "" : "border-r"}`}>
                <Fit w={w}>{h}</Fit>
              </span>
            ))}
            <span className="flex items-center pt-[2px] pl-px"><Fit w={13}>URL</Fit></span>
          </div>
          {ROWS.map((r, i) => {
            const plain = BORDERLESS.includes(i + 1);
            return (
              <div key={i} className={`${GRID} h-[21.91px] ${i % 2 ? "bg-[#e8e6e2]" : "bg-white"} ${plain ? "" : "border-b border-[#c0c0c0]"}`}>
                <span className="flex items-center bg-linear-to-r from-white to-[#ececec] pt-[2px] pl-[1px] text-[#333]"><Fit>{String(i + 1)}</Fit></span>
                {i === 0 ? (
                  <span className="flex items-center justify-end border border-[#15f07e] bg-linear-to-b from-white to-[#e6f1fb] pt-px pr-px ring-1 ring-[#15f07e]/50 ring-inset"><Fit w={35}>{r[0]}</Fit></span>
                ) : (
                  <Cell t={r[0]} right w={35} />
                )}
                <Cell t={r[1]} />
                <Cell t={r[2]} />
                <Cell t={r[3]} right />
                <Cell t={r[4]} right />
                <Cell t={r[5]} />
                <Cell t={r[6]} />
                <Cell t={`2019-${r[7]} 00:0...`} />
                <Cell t={`2019-${r[8]} 23:5...`} />
                <Cell t={r[9]} noLine w={r[9] ? 19.5 : undefined} />
                <Cell t={r[10]} />
                <Cell t="http://www.ma..." />
                <Cell t={r[11]} />
                <Cell t="http://www.ma..." />
                <span className="flex items-center overflow-hidden pt-px pl-[2.5px]">{r[12] && <Fit w={66}>http://www.ma...</Fit>}</span>
              </div>
            );
          })}
        </div>
        <div className="flex flex-1 flex-col items-center border-l border-[#c0c0c0] bg-[#e8e8e8]">
          <span className="flex h-[11px] w-full items-center justify-center border-b border-[#c0c0c0] bg-[#f6f6f6]"><span className="border-x-[2.5px] border-b-[3px] border-x-transparent border-b-[#555]" /></span>
          <span className="h-[19px] w-full border-b border-[#c0c0c0] bg-white" />
          <span className="flex-1" />
          <span className="flex h-[11px] w-full items-center justify-center border-t border-[#c0c0c0] bg-[#f6f6f6]"><span className="border-x-[2.5px] border-t-[3px] border-x-transparent border-t-[#555]" /></span>
        </div>
      </div>
      <div className="flex h-[10px] shrink-0 items-center border-b border-[#b8b8b8] bg-[#e6e6e6]">
        <span className="flex h-full w-[648px] items-center bg-linear-to-b from-white to-[#f4f4f4] pl-[4px]"><span className="border-y-[2.5px] border-r-[3px] border-y-transparent border-r-[#555]" /></span>
        <span className="flex-1" />
        <span className="flex h-full w-[10px] items-center justify-center border-x border-[#c0c0c0] bg-[#f6f6f6]"><span className="border-y-[2.5px] border-l-[3px] border-y-transparent border-l-[#555]" /></span>
        <span className="w-[11px]" />
      </div>
      <footer className="flex flex-1 items-center justify-between pr-[2px] pl-[1px]">
        <span className="flex h-[16px] w-[152px] items-center gap-[3px] rounded-[1px] border border-[#a9a9a9] bg-linear-to-b from-[#fbfbfb] to-[#ececec] pl-[3px]">
          <Icon k="funnel" cls="size-[11px]" />
          <Fit w={128}>Mostrar todos los objetos espaciales</Fit>
          <span className="mt-[8px] -ml-[2px] border-x-[2px] border-t-[2px] border-x-transparent border-t-[#666]" />
        </span>
        <span className="flex items-center gap-[4px]">
          <Icon k="form" cls="size-[10px]" />
          <span className="flex h-[16px] w-[17px] items-center justify-center border border-[#b0b0b0] bg-[#dadada]"><Icon k="table" cls="size-[11px]" /></span>
        </span>
      </footer>
    </section>
  );
}

function lcg(seed: number) {
  let s = seed;
  return () => ((s = (s * 1103515245 + 12345) % 2147483648) / 2147483648);
}
/* Scattered building footprints inside a slanted box. */
function Blocks({ seed, n, x, y, w, h, skew = 0, size = 3, dark = 0.3 }: { seed: number; n: number; x: number; y: number; w: number; h: number; skew?: number; size?: number; dark?: number }) {
  const rnd = lcg(seed);
  return (
    <g>
      {Array.from({ length: n }, (_, i) => {
        const py = rnd() * h;
        const px = x + rnd() * w + (py / h) * skew;
        return <rect key={i} x={px} y={y + py} width={0.7 + rnd() * size} height={0.7 + rnd() * size} fill={rnd() < dark ? "#7380b0" : "#b0b9d8"} />;
      })}
    </g>
  );
}

function MapCanvas() {
  return (
    <svg viewBox="501 318 1075 661" className="h-full w-full" preserveAspectRatio="none">
      <path d="M504 318L517 335 521 345 529 360H985L977 349 991 332 994 324 989 318z" fill="#e8ecf6" />
      <path d="M899 318Q889 331 876 335T850 348L845 359" fill="none" stroke="#fff" strokeWidth="1.300" />
      <Blocks seed={3} n={42} x={707} y={322} w={5} h={15} skew={5} size={1.600} dark={0.6} />
      <Blocks seed={8} n={14} x={710} y={338} w={8} h={9} skew={4} size={1.200} dark={0.2} />
      <Blocks seed={9} n={20} x={713} y={347} w={5} h={9} skew={5} size={1.800} dark={0.7} />
      <Blocks seed={11} n={20} x={898} y={318} w={26} h={14} size={1.500} dark={0.2} />
      <Blocks seed={12} n={44} x={936} y={333} w={18} h={12} size={1.600} dark={0.4} />
      <Blocks seed={14} n={26} x={920} y={343} w={40} h={14} size={1.600} dark={0.4} />
      <path d="M855 943H1266L1257 954 1244 979H852z" fill="#e8ecf6" />
      <Blocks seed={21} n={330} x={870} y={943} w={36} h={20} size={1.800} />
      <Blocks seed={22} n={55} x={873} y={967} w={34} h={10} size={2.600} dark={0.6} />
      <Blocks seed={23} n={12} x={852} y={968} w={9} h={8} size={3} dark={0.8} />
      <Blocks seed={24} n={80} x={907} y={943} w={23} h={34} size={2.600} dark={0.5} />
      <Blocks seed={25} n={150} x={932} y={953} w={20} h={23} size={1.600} dark={0.2} />
      <Blocks seed={26} n={45} x={957} y={943} w={16} h={18} size={2.600} dark={0.6} />
      <Blocks seed={27} n={36} x={958} y={957} w={28} h={19} size={1.800} dark={0.4} />
      <Blocks seed={28} n={10} x={988} y={943} w={16} h={32} size={1.600} />
      <Blocks seed={29} n={75} x={1232} y={943} w={5} h={36} skew={-36} size={1.600} />
      <Blocks seed={30} n={12} x={1194} y={952} w={5} h={24} size={1.600} />
      <path d="M958 951h9v4h-9z" fill="#4f5e98" />
      <path d="M932 943v36M954 943v36M992 957q10-3 12 8l5 14" fill="none" stroke="#fff" strokeWidth="1.300" />
    </svg>
  );
}

const Spin = () => (
  <span className="flex h-full w-[9px] flex-col items-center justify-center gap-[3px] border-l border-[#b0b0b0]">
    <span className="border-x-[2px] border-b-[3px] border-x-transparent border-b-[#444]" />
    <span className="border-x-[2px] border-t-[3px] border-x-transparent border-t-[#444]" />
  </span>
);

function DockTools() {
  const items: [string, boolean][] = [
    ["vec", false], ["raster", false], ["comma", false], ["splg", false], ["virt", false],
    ["pgadd", true], ["wmsadd", true], ["wcsadd", false], ["wfsadd", true], ["vecy", true],
  ];
  return (
    <aside className="flex w-[31px] shrink-0 flex-col bg-linear-to-r from-[#fafafa] to-[#ececec] pt-[3px]">
      <span className="ml-[11px] h-[4px] w-[12px] border-y border-dotted border-[#b5b5b5]" />
      <div className="mt-[1.5px] flex flex-col">
        {items.map(([k, v], i) => (
          <span key={i} className="flex h-[17.5px] items-center gap-[4px] pl-[5.5px]">
            <Icon k={k} />
            {v && <Caret />}
          </span>
        ))}
      </div>
    </aside>
  );
}

function MainWindow() {
  return (
    <section className="flex h-[761px] w-[1400px] flex-col bg-[#efefef] font-['Noto_Sans',sans-serif] text-[9px] leading-[12px] text-black">
      <header className="flex h-[19px] shrink-0 items-center bg-white pr-[14px] text-[#8a8a8a]">
        <Icon k="qgis" cls="size-[13px]" />
        <span className="ml-[4px] flex-1"><Fit w={54.5}>*clase3 - QGIS</Fit></span>
        <span className="h-px w-[8px] bg-[#777]" />
        <svg viewBox="0 0 9 9" className="ml-[25px] size-[8px]"><path d="M.5 2.500h6v6h-6zM2.500 2V.5h6v6H7" fill="none" stroke="#777" /></svg>
        <svg viewBox="0 0 8 8" className="ml-[25px] size-[8px]"><path d="M.5.500l7 7M7.500.5l-7 7" stroke="#777" /></svg>
      </header>
      <nav className="flex h-[14px] shrink-0 items-center gap-[10.4px] pl-[7px] text-[#999]">
        {MENU.map(([m, w]) => <Fit key={m} w={w}>{m}</Fit>)}
      </nav>
      <div className="flex h-[23px] shrink-0 items-center border-b border-[#b5b5b5] bg-linear-to-b from-[#fbfbfb] to-[#efefef]">
        <div className="-ml-[2px] flex items-center">
          <Tools items="| new open save saveas layout layoutmgr style | !hand pan zin zout z11 zfull zsel zlay zgray zgray mapnew book book2 refresh | ident action v selrect v selval v desel table stats gear sigma measure v tip text v" />
        </div>
      </div>
      <div className="flex h-[23px] shrink-0 items-center border-b border-[#b5b5b5] bg-linear-to-b from-[#fbfbfb] to-[#efefef]">
        <div className="-ml-[1.5px] flex items-center">
          <Tools items="| dsm gpkgnew shp spl chip | pencils pencil gsave gpts gnode v gnote gtrash gcut gcopy gpaste gundo gredo | lab diag labbox gl1 gl2 gl3 gl4 gl4 | metas | python | help | nn | ruler gpts v gq1 gq2 gq3 gq4 gq3 gq3 gq4 gq5 gq6 gq7 gq4 gq4 gq5 gq8 gq9 v" />
        </div>
      </div>
      <div className="flex min-h-0 flex-1">
        <DockTools />
        <div className="flex w-[288px] shrink-0 flex-col border-l border-[#b0b0b0]">
          <div className="flex h-[14px] shrink-0 items-center justify-between pr-[2px] pl-[3px]">
            <Fit w={42}>Navegador</Fit>
            <svg viewBox="0 0 19 9" className="h-[9px] w-[19px]"><path d="M.5.500h8v8h-8zM3 4.500h3v2H3zM4.500 2.500h2.500v2M10.500.500h8v8h-8zM12.500 2.500l4 4M16.500 2.500l-4 4" fill="none" stroke="#777" /></svg>
          </div>
          <div className="flex h-[22px] shrink-0 items-center pl-[3px]"><Tools items="addlay refresh funnel up info" /></div>
          <div className="flex h-[288px] shrink-0 flex-col border border-[#b8b8b8] bg-white pt-[1px]">
            {NAV.map(([k, n, a, w], i) => (
              <div key={i} className="flex h-[13.13px] shrink-0 items-center pl-[6px]">
                <Twisty show={a} />
                <span className="mr-[4.5px] ml-[5px] flex"><Icon k={k} cls="size-[11.5px]" /></span>
                <Fit w={w}>{n}</Fit>
              </div>
            ))}
          </div>
          <div className="mt-[5px] flex h-[14px] shrink-0 items-center pl-[3px]"><Fit w={23}>Capas</Fit></div>
          <div className="flex h-[22px] shrink-0 items-center pb-px pl-[3px]"><Tools items="brush groupadd eye funnel eps v down up remove" /></div>
          <div className="flex min-h-0 flex-1 flex-col border border-[#b8b8b8] bg-white">
            {LAYERS.map((l, i) => (
              <div key={i} className={`flex h-[13.13px] shrink-0 items-center pl-[6px] ${l.s === "bi" ? "bg-[#efefef]" : ""}`}>
                <Twisty show={l.arrow} />
                <span className="ml-[5.5px] flex"><Check on={l.on} /></span>
                <span className="ml-[4.5px] flex w-[12px] justify-center">
                  {l.k[0] === "#" ? <span className={`size-[11.5px] border ${SWATCH[l.k]}`} /> : <Icon k={l.k} cls="size-[11px]" />}
                </span>
                <span className={`ml-[4px] ${LAYER_TEXT[l.s]}`}><Fit w={l.w}>{l.n}</Fit></span>
              </div>
            ))}
          </div>
        </div>
        <div className="ml-[4px] min-w-0 flex-1 border-x border-b border-[#b0b0b0] bg-white"><MapCanvas /></div>
      </div>
      <footer className="flex h-[21px] shrink-0 items-center border-b border-[#a59a8e] pl-[3px]">
        <span className="flex h-[16px] w-[185.5px] items-center gap-[5px] rounded-[2px] border border-[#a5a5a5] bg-white pl-[4px] text-[#777]">
          <Icon k="search" cls="size-[10px]" />
          <Fit w={103}>Escriba para localizar (Ctrl+K)</Fit>
        </span>
        <span className="ml-auto flex items-center pr-[5px]">
          <Fit w={42.5}>Coordenada</Fit>
          <span className="ml-[3px] flex h-[16px] w-[66px] items-center rounded-[2px] border border-[#a5a5a5] bg-white pl-[2px]"><Fit w={60}>447306,4465554</Fit></span>
          <span className="ml-[4px] flex"><Icon k="ext" cls="size-[11px]" /></span>
          <span className="ml-[9.5px]"><Fit w={22}>Escala</Fit></span>
          <span className="ml-[3px] flex h-[16px] w-[58px] items-center justify-between rounded-[2px] border border-[#a5a5a5] bg-white pr-[5px] pl-[2px]"><Fit w={29}>1:92081</Fit><span className="border-x-[2px] border-t-[3px] border-x-transparent border-t-[#666]" /></span>
          <span className="ml-[8px] flex"><Icon k="lock" cls="size-[11px]" /></span>
          <span className="ml-[5px]"><Fit w={42}>Amplificador</Fit></span>
          <span className="ml-[3px] flex h-[14px] w-[64px] items-center justify-between border border-[#b5b5b5] bg-white pl-[3px]"><Fit w={20.5}>100%</Fit><Spin /></span>
          <span className="ml-[6px]"><Fit w={31}>Rotación</Fit></span>
          <span className="ml-[7px] flex h-[14px] w-[61px] items-center justify-between border border-[#b5b5b5] bg-white pl-[2px]"><Fit w={19}>0,0 °</Fit><Spin /></span>
          <span className="ml-[5px] flex"><Check on /></span>
          <span className="ml-[3px]"><Fit w={44}>Representar</Fit></span>
          <span className="ml-[13px] flex"><Icon k="crs" cls="size-[11px]" /></span>
          <span className="ml-[3px]"><Fit w={39}>EPSG:3042</Fit></span>
          <span className="ml-[14px] flex"><Icon k="bubble" cls="size-[12px]" /></span>
        </span>
      </footer>
    </section>
  );
}

export default function App() {
  return (
    <main className="relative flex h-[1240px] w-[1754px] flex-col overflow-hidden border-2 border-[#f4524a] bg-white font-['Noto_Sans',sans-serif] text-[23.5px] text-[#2b3764]">
      <h1 className="mt-[157px] ml-[175px] h-[80px] leading-[30px]">
        <Fit w={286}>Volvemos al archivo QGIS</Fit>
        <br />
        <Fit w={172}>del día anterior</Fit>
      </h1>
      <div className="ml-[175px]"><MainWindow /></div>
      <div className="mt-[77px] ml-[621px] flex h-[65px] items-center">
        <span className="-mt-[7px] leading-[30px]"><Fit w={556}>Queremos manipular la capa “eventos culturales”</Fit></span>
        <svg viewBox="0 0 104 20" className="ml-[20px] h-[20px] w-[104px]" fill="none" stroke="#2b3764" strokeWidth="2">
          <path d="M1 10h101M93.500 2l8.500 8-8.500 8" />
        </svg>
        <svg viewBox="0 0 65 65" className="ml-[20px] size-[65px]">
          <path d="M0 0h65v65H0z" fill="#edbd14" />
          <path d="M16 44.500q-4 0-4-4V22q0-4.500 4.500-4.500h33q4.500 0 4.500 4.500v18.500q0 4-5 4" fill="none" stroke="#000" strokeWidth="1.800" />
          <path d="M21.500 42.500V48M29 33.500V48M36.500 37.500V48M44 28V48" stroke="#000" strokeWidth="5" strokeLinecap="round" />
        </svg>
        <span className="ml-[15px] leading-[30px] text-black"><Fit w={100}>Power BI</Fit></span>
      </div>
      <div className="absolute -top-[2px] -left-[2px]">
        <AttributeTable />
        <svg viewBox="0 0 174 170" className="absolute top-[953px] left-[425px] h-[170px] w-[174px]" fill="none" stroke="#2b3764" strokeWidth="2">
          <path d="M2 0v157h169M163 149l9 8-9 8" />
        </svg>
      </div>
    </main>
  );
}
